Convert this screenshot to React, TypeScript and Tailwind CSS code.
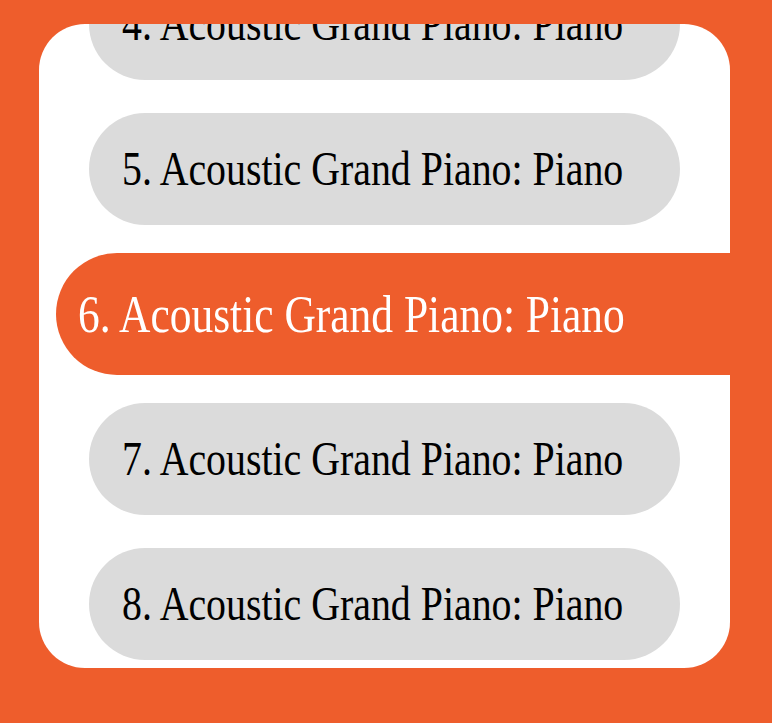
const items = [4, 5, 6, 7, 8]
const selected = 6

export default function App() {
  return (
    <div className="w-[772px] h-[723px] bg-[#ee5d2c] pl-[39px] pt-[24px] overflow-hidden [font-family:'Liberation_Serif','Times_New_Roman',serif]">
      <div className="w-[691px] h-[644px] bg-white rounded-[46px] overflow-hidden">
        {/* list, scrolled so item 4 is cut off */}
        <div className="flex flex-col gap-[33px] mt-[-56px]">
          {items.map((n) =>
            n === selected ? (
              <div
                key={n}
                className="-my-[5px] ml-[17px] w-[720px] h-[122px] shrink-0 rounded-l-full bg-[#ee5d2c] flex items-center pl-[22px]"
              >
                <span className="inline-block origin-left scale-x-[0.82] whitespace-nowrap text-white text-[53px] leading-none">
                  {n}. Acoustic Grand Piano: Piano
                </span>
              </div>
            ) : (
              <div
                key={n}
                className="ml-[50px] w-[591px] h-[112px] shrink-0 rounded-full bg-[#dbdbdb] flex items-center pl-[33px]"
              >
                <span className="inline-block origin-left scale-x-[0.83] whitespace-nowrap text-black text-[48px] leading-none">
                  {n}. Acoustic Grand Piano: Piano
                </span>
              </div>
            )
          )}
        </div>
      </div>
    </div>
  )
}
